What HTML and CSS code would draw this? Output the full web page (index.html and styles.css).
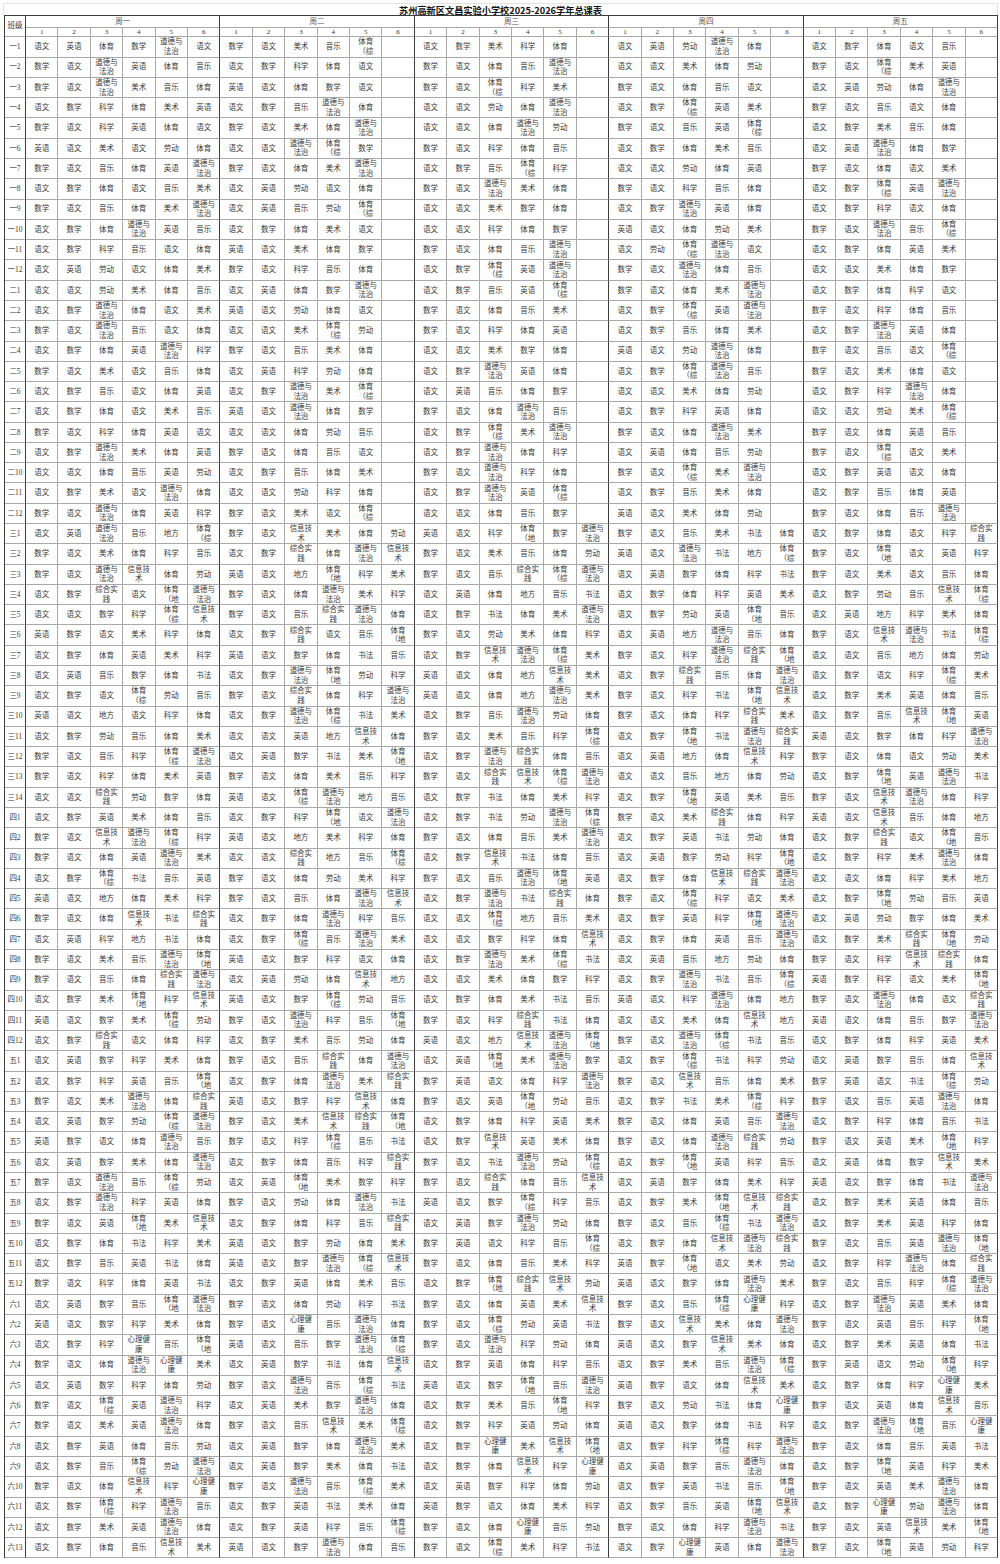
FILE: index.html
```html
<!DOCTYPE html>
<html lang="zh-CN">
<head>
<meta charset="utf-8">
<title>苏州高新区文昌实验小学校2025-2026学年总课表</title>
<link rel="stylesheet" href="styles.css">
</head>
<body>
<div class="sheet">
<div class="title">苏州高新区文昌实验小学校2025-2026学年总课表</div>
<table class="grid">
<colgroup><col class="k"><col span="30" class="p"></colgroup>
<thead>
<tr class="h1"><th rowspan="2" class="cls">班级</th><th colspan="6">周一</th><th colspan="6">周二</th><th colspan="6">周三</th><th colspan="6">周四</th><th colspan="6">周五</th></tr>
<tr class="h2"><th>1</th><th>2</th><th>3</th><th>4</th><th>5</th><th>6</th><th>1</th><th>2</th><th>3</th><th>4</th><th>5</th><th>6</th><th>1</th><th>2</th><th>3</th><th>4</th><th>5</th><th>6</th><th>1</th><th>2</th><th>3</th><th>4</th><th>5</th><th>6</th><th>1</th><th>2</th><th>3</th><th>4</th><th>5</th><th>6</th></tr>
</thead>
<tbody>
<tr><th>一1<td>语文<td>英语<td>体育<td>数学<td>道德与法治<td>语文<td>数学<td>语文<td>美术<td>音乐<td>体育（综<td><td>语文<td>数学<td>美术<td>科学<td>体育<td><td>语文<td>英语<td>劳动<td>道德与法治<td>体育<td><td>语文<td>数学<td>体育<td>语文<td>音乐<td>
<tr><th>一2<td>数学<td>语文<td>道德与法治<td>英语<td>体育<td>音乐<td>语文<td>数学<td>科学<td>体育<td>语文<td><td>数学<td>语文<td>体育<td>音乐<td>道德与法治<td><td>语文<td>语文<td>美术<td>体育<td>劳动<td><td>数学<td>语文<td>体育（综<td>美术<td>英语<td>
<tr><th>一3<td>数学<td>语文<td>道德与法治<td>美术<td>音乐<td>体育<td>英语<td>语文<td>体育<td>数学<td>语文<td><td>数学<td>语文<td>体育（综<td>科学<td>美术<td><td>数学<td>语文<td>体育<td>音乐<td>语文<td><td>语文<td>英语<td>劳动<td>体育<td>道德与法治<td>
<tr><th>一4<td>语文<td>数学<td>科学<td>体育<td>美术<td>英语<td>语文<td>数学<td>音乐<td>道德与法治<td>体育<td><td>语文<td>语文<td>劳动<td>体育<td>道德与法治<td><td>语文<td>数学<td>体育（综<td>英语<td>美术<td><td>数学<td>语文<td>音乐<td>语文<td>体育<td>
<tr><th>一5<td>数学<td>语文<td>科学<td>英语<td>体育<td>语文<td>数学<td>语文<td>美术<td>体育<td>道德与法治<td><td>语文<td>语文<td>体育<td>道德与法治<td>劳动<td><td>数学<td>语文<td>音乐<td>英语<td>体育（综<td><td>语文<td>数学<td>美术<td>音乐<td>体育<td>
<tr><th>一6<td>英语<td>语文<td>美术<td>语文<td>劳动<td>体育<td>语文<td>语文<td>道德与法治<td>体育（综<td>数学<td><td>数学<td>语文<td>科学<td>体育<td>音乐<td><td>语文<td>数学<td>体育<td>美术<td>音乐<td><td>语文<td>英语<td>道德与法治<td>体育<td>数学<td>
<tr><th>一7<td>数学<td>语文<td>音乐<td>体育<td>英语<td>道德与法治<td>数学<td>语文<td>体育<td>美术<td>道德与法治<td><td>语文<td>数学<td>音乐<td>体育（综<td>科学<td><td>语文<td>语文<td>劳动<td>体育<td>英语<td><td>数学<td>语文<td>体育<td>语文<td>美术<td>
<tr><th>一8<td>语文<td>数学<td>体育<td>语文<td>音乐<td>美术<td>语文<td>英语<td>劳动<td>语文<td>体育<td><td>数学<td>语文<td>道德与法治<td>美术<td>体育<td><td>数学<td>语文<td>科学<td>音乐<td>体育<td><td>语文<td>数学<td>体育（综<td>英语<td>道德与法治<td>
<tr><th>一9<td>数学<td>语文<td>音乐<td>体育<td>美术<td>道德与法治<td>语文<td>英语<td>音乐<td>劳动<td>体育（综<td><td>语文<td>语文<td>美术<td>数学<td>体育<td><td>语文<td>数学<td>道德与法治<td>英语<td>体育<td><td>语文<td>数学<td>科学<td>语文<td>体育<td>
<tr><th>一10<td>语文<td>数学<td>体育<td>道德与法治<td>英语<td>音乐<td>语文<td>数学<td>体育<td>美术<td>语文<td><td>语文<td>语文<td>科学<td>体育<td>数学<td><td>英语<td>语文<td>体育<td>劳动<td>美术<td><td>数学<td>语文<td>道德与法治<td>音乐<td>体育（综<td>
<tr><th>一11<td>语文<td>数学<td>科学<td>音乐<td>语文<td>体育<td>英语<td>语文<td>美术<td>体育<td>数学<td><td>数学<td>语文<td>体育<td>音乐<td>道德与法治<td><td>语文<td>劳动<td>体育（综<td>道德与法治<td>语文<td><td>语文<td>数学<td>体育<td>英语<td>美术<td>
<tr><th>一12<td>语文<td>英语<td>劳动<td>语文<td>体育<td>美术<td>数学<td>语文<td>科学<td>音乐<td>体育<td><td>语文<td>数学<td>体育（综<td>英语<td>道德与法治<td><td>数学<td>语文<td>道德与法治<td>体育<td>音乐<td><td>语文<td>语文<td>美术<td>体育<td>数学<td>
<tr><th>二1<td>语文<td>语文<td>劳动<td>美术<td>体育<td>音乐<td>语文<td>英语<td>体育<td>数学<td>道德与法治<td><td>语文<td>数学<td>音乐<td>英语<td>体育（综<td><td>数学<td>语文<td>体育<td>美术<td>道德与法治<td><td>语文<td>数学<td>体育<td>科学<td>语文<td>
<tr><th>二2<td>语文<td>数学<td>道德与法治<td>体育<td>语文<td>美术<td>英语<td>语文<td>劳动<td>体育<td>语文<td><td>数学<td>语文<td>体育<td>音乐<td>美术<td><td>语文<td>数学<td>体育（综<td>英语<td>道德与法治<td><td>数学<td>语文<td>科学<td>体育<td>音乐<td>
<tr><th>二3<td>数学<td>语文<td>道德与法治<td>音乐<td>语文<td>体育<td>语文<td>语文<td>美术<td>体育（综<td>劳动<td><td>数学<td>语文<td>科学<td>体育<td>英语<td><td>语文<td>数学<td>音乐<td>体育<td>美术<td><td>语文<td>数学<td>道德与法治<td>英语<td>体育<td>
<tr><th>二4<td>语文<td>数学<td>体育<td>英语<td>道德与法治<td>科学<td>数学<td>语文<td>音乐<td>美术<td>体育<td><td>语文<td>语文<td>美术<td>数学<td>体育<td><td>英语<td>语文<td>劳动<td>道德与法治<td>体育<td><td>数学<td>语文<td>音乐<td>语文<td>体育（综<td>
<tr><th>二5<td>数学<td>语文<td>美术<td>语文<td>音乐<td>体育<td>语文<td>英语<td>科学<td>劳动<td>体育<td><td>语文<td>数学<td>道德与法治<td>英语<td>体育<td><td>语文<td>数学<td>体育（综<td>道德与法治<td>音乐<td><td>数学<td>语文<td>美术<td>体育<td>语文<td>
<tr><th>二6<td>语文<td>数学<td>音乐<td>语文<td>体育<td>英语<td>语文<td>数学<td>道德与法治<td>美术<td>体育（综<td><td>语文<td>英语<td>音乐<td>体育<td>数学<td><td>语文<td>语文<td>美术<td>体育<td>劳动<td><td>语文<td>数学<td>科学<td>道德与法治<td>体育<td>
<tr><th>二7<td>语文<td>数学<td>体育<td>语文<td>美术<td>音乐<td>英语<td>语文<td>道德与法治<td>体育<td>数学<td><td>数学<td>语文<td>体育<td>道德与法治<td>音乐<td><td>语文<td>数学<td>科学<td>英语<td>体育<td><td>语文<td>语文<td>劳动<td>美术<td>体育（综<td>
<tr><th>二8<td>数学<td>语文<td>科学<td>体育<td>英语<td>语文<td>语文<td>语文<td>体育<td>劳动<td>音乐<td><td>语文<td>数学<td>体育（综<td>美术<td>道德与法治<td><td>数学<td>语文<td>体育<td>道德与法治<td>美术<td><td>数学<td>语文<td>体育<td>英语<td>音乐<td>
<tr><th>二9<td>语文<td>数学<td>道德与法治<td>美术<td>体育<td>英语<td>数学<td>语文<td>体育<td>音乐<td>语文<td><td>语文<td>数学<td>道德与法治<td>体育<td>科学<td><td>语文<td>英语<td>体育<td>音乐<td>劳动<td><td>数学<td>语文<td>体育（综<td>语文<td>美术<td>
<tr><th>二10<td>语文<td>语文<td>体育<td>音乐<td>英语<td>劳动<td>语文<td>数学<td>音乐<td>体育<td>美术<td><td>数学<td>语文<td>道德与法治<td>科学<td>体育<td><td>数学<td>语文<td>体育（综<td>美术<td>道德与法治<td><td>语文<td>数学<td>英语<td>语文<td>体育<td>
<tr><th>二11<td>语文<td>数学<td>美术<td>语文<td>道德与法治<td>体育<td>语文<td>语文<td>劳动<td>科学<td>体育<td><td>语文<td>数学<td>道德与法治<td>英语<td>体育（综<td><td>语文<td>数学<td>音乐<td>美术<td>体育<td><td>语文<td>数学<td>音乐<td>体育<td>英语<td>
<tr><th>二12<td>数学<td>语文<td>道德与法治<td>体育<td>英语<td>科学<td>数学<td>语文<td>美术<td>语文<td>体育（综<td><td>语文<td>语文<td>体育<td>音乐<td>数学<td><td>英语<td>语文<td>美术<td>体育<td>劳动<td><td>数学<td>语文<td>体育<td>音乐<td>道德与法治<td>
<tr><th>三1<td>语文<td>英语<td>道德与法治<td>音乐<td>地方<td>体育（综<td>数学<td>语文<td>信息技术<td>美术<td>体育<td>劳动<td>英语<td>语文<td>科学<td>体育（地<td>数学<td>道德与法治<td>数学<td>语文<td>音乐<td>美术<td>书法<td>体育<td>语文<td>数学<td>体育<td>语文<td>科学<td>综合实践
<tr><th>三2<td>数学<td>语文<td>美术<td>体育<td>科学<td>音乐<td>语文<td>数学<td>综合实践<td>体育<td>道德与法治<td>信息技术<td>数学<td>语文<td>美术<td>音乐<td>体育<td>劳动<td>英语<td>语文<td>道德与法治<td>书法<td>地方<td>体育（综<td>数学<td>语文<td>体育（地<td>语文<td>英语<td>科学
<tr><th>三3<td>数学<td>语文<td>道德与法治<td>信息技术<td>体育<td>劳动<td>英语<td>语文<td>地方<td>体育（地<td>科学<td>美术<td>数学<td>语文<td>音乐<td>综合实践<td>体育（综<td>道德与法治<td>语文<td>英语<td>数学<td>体育<td>科学<td>书法<td>数学<td>语文<td>美术<td>语文<td>音乐<td>体育
<tr><th>三4<td>语文<td>数学<td>综合实践<td>语文<td>体育（地<td>道德与法治<td>数学<td>语文<td>体育<td>道德与法治<td>美术<td>科学<td>语文<td>英语<td>体育<td>地方<td>音乐<td>书法<td>语文<td>数学<td>体育<td>科学<td>英语<td>美术<td>语文<td>数学<td>劳动<td>音乐<td>信息技术<td>体育（综
<tr><th>三5<td>语文<td>语文<td>数学<td>科学<td>体育（综<td>信息技术<td>数学<td>语文<td>音乐<td>综合实践<td>道德与法治<td>体育<td>语文<td>数学<td>书法<td>体育<td>美术<td>道德与法治<td>语文<td>数学<td>劳动<td>英语<td>体育（地<td>音乐<td>语文<td>英语<td>地方<td>科学<td>美术<td>体育
<tr><th>三6<td>英语<td>数学<td>语文<td>美术<td>科学<td>体育<td>语文<td>数学<td>综合实践<td>语文<td>音乐<td>体育（地<td>数学<td>语文<td>劳动<td>美术<td>体育<td>科学<td>语文<td>英语<td>地方<td>道德与法治<td>音乐<td>体育<td>数学<td>语文<td>信息技术<td>道德与法治<td>书法<td>体育（综
<tr><th>三7<td>语文<td>数学<td>体育<td>英语<td>美术<td>科学<td>英语<td>语文<td>数学<td>体育<td>书法<td>音乐<td>语文<td>数学<td>信息技术<td>道德与法治<td>体育（综<td>美术<td>数学<td>语文<td>科学<td>道德与法治<td>综合实践<td>体育（地<td>语文<td>语文<td>音乐<td>地方<td>体育<td>劳动
<tr><th>三8<td>语文<td>英语<td>音乐<td>数学<td>体育<td>书法<td>语文<td>数学<td>道德与法治<td>体育（地<td>劳动<td>科学<td>英语<td>语文<td>体育<td>地方<td>信息技术<td>美术<td>语文<td>数学<td>综合实践<td>音乐<td>体育<td>道德与法治<td>语文<td>数学<td>语文<td>科学<td>体育（综<td>美术
<tr><th>三9<td>语文<td>数学<td>语文<td>体育（综<td>劳动<td>音乐<td>数学<td>语文<td>综合实践<td>体育<td>科学<td>道德与法治<td>英语<td>语文<td>体育<td>地方<td>道德与法治<td>美术<td>数学<td>语文<td>科学<td>书法<td>体育（地<td>信息技术<td>语文<td>数学<td>美术<td>英语<td>体育<td>音乐
<tr><th>三10<td>英语<td>语文<td>地方<td>语文<td>科学<td>体育<td>语文<td>数学<td>道德与法治<td>体育（综<td>书法<td>美术<td>语文<td>数学<td>音乐<td>道德与法治<td>劳动<td>体育<td>数学<td>语文<td>体育<td>科学<td>综合实践<td>美术<td>语文<td>数学<td>音乐<td>信息技术<td>体育（地<td>英语
<tr><th>三11<td>语文<td>数学<td>劳动<td>音乐<td>体育<td>美术<td>语文<td>语文<td>英语<td>地方<td>信息技术<td>体育<td>数学<td>语文<td>美术<td>音乐<td>科学<td>体育（综<td>语文<td>数学<td>体育（地<td>书法<td>道德与法治<td>综合实践<td>英语<td>语文<td>数学<td>体育<td>科学<td>道德与法治
<tr><th>三12<td>数学<td>语文<td>音乐<td>科学<td>体育（综<td>道德与法治<td>语文<td>英语<td>数学<td>书法<td>美术<td>体育（地<td>语文<td>数学<td>道德与法治<td>综合实践<td>体育<td>音乐<td>语文<td>英语<td>地方<td>体育<td>信息技术<td>科学<td>数学<td>语文<td>体育<td>语文<td>劳动<td>美术
<tr><th>三13<td>数学<td>语文<td>科学<td>体育<td>美术<td>英语<td>数学<td>语文<td>体育<td>美术<td>音乐<td>科学<td>数学<td>语文<td>综合实践<td>信息技术<td>体育（综<td>道德与法治<td>语文<td>语文<td>音乐<td>地方<td>体育<td>劳动<td>语文<td>数学<td>体育（地<td>英语<td>道德与法治<td>书法
<tr><th>三14<td>语文<td>语文<td>综合实践<td>劳动<td>数学<td>体育<td>英语<td>语文<td>体育（综<td>道德与法治<td>地方<td>音乐<td>语文<td>数学<td>书法<td>体育<td>美术<td>科学<td>语文<td>数学<td>体育（地<td>英语<td>美术<td>音乐<td>数学<td>语文<td>信息技术<td>道德与法治<td>体育<td>科学
<tr><th>四1<td>语文<td>数学<td>英语<td>美术<td>体育<td>音乐<td>语文<td>数学<td>科学<td>体育（地<td>语文<td>道德与法治<td>语文<td>数学<td>书法<td>劳动<td>道德与法治<td>体育（综<td>数学<td>语文<td>美术<td>综合实践<td>体育<td>科学<td>英语<td>语文<td>信息技术<td>音乐<td>体育<td>地方
<tr><th>四2<td>数学<td>语文<td>信息技术<td>道德与法治<td>体育（综<td>科学<td>英语<td>语文<td>地方<td>美术<td>科学<td>体育<td>数学<td>语文<td>体育<td>音乐<td>美术<td>道德与法治<td>语文<td>数学<td>英语<td>书法<td>劳动<td>体育<td>语文<td>数学<td>综合实践<td>语文<td>体育（地<td>音乐
<tr><th>四3<td>数学<td>语文<td>体育<td>英语<td>道德与法治<td>美术<td>语文<td>语文<td>综合实践<td>地方<td>音乐<td>体育（综<td>语文<td>数学<td>信息技术<td>书法<td>体育<td>音乐<td>语文<td>英语<td>数学<td>劳动<td>科学<td>体育（地<td>语文<td>数学<td>科学<td>美术<td>道德与法治<td>体育
<tr><th>四4<td>语文<td>数学<td>体育（综<td>书法<td>音乐<td>英语<td>数学<td>语文<td>体育<td>劳动<td>美术<td>科学<td>数学<td>语文<td>音乐<td>道德与法治<td>体育（地<td>英语<td>语文<td>数学<td>体育<td>信息技术<td>综合实践<td>道德与法治<td>语文<td>语文<td>体育<td>科学<td>美术<td>地方
<tr><th>四5<td>英语<td>语文<td>地方<td>体育<td>美术<td>科学<td>数学<td>语文<td>音乐<td>体育<td>道德与法治<td>信息技术<td>语文<td>数学<td>道德与法治<td>书法<td>综合实践<td>体育<td>数学<td>语文<td>体育（综<td>科学<td>语文<td>美术<td>语文<td>数学<td>体育（地<td>劳动<td>音乐<td>英语
<tr><th>四6<td>数学<td>语文<td>体育<td>信息技术<td>书法<td>综合实践<td>语文<td>数学<td>体育<td>道德与法治<td>科学<td>音乐<td>语文<td>语文<td>体育（综<td>地方<td>音乐<td>美术<td>语文<td>数学<td>英语<td>科学<td>体育（地<td>道德与法治<td>语文<td>英语<td>劳动<td>数学<td>体育<td>美术
<tr><th>四7<td>语文<td>英语<td>科学<td>地方<td>书法<td>体育<td>语文<td>数学<td>体育（综<td>音乐<td>道德与法治<td>美术<td>语文<td>语文<td>数学<td>科学<td>体育<td>信息技术<td>语文<td>数学<td>体育<td>英语<td>音乐<td>道德与法治<td>语文<td>数学<td>美术<td>综合实践<td>体育（地<td>劳动
<tr><th>四8<td>数学<td>语文<td>美术<td>音乐<td>道德与法治<td>体育（地<td>英语<td>语文<td>数学<td>科学<td>语文<td>体育<td>语文<td>数学<td>道德与法治<td>美术<td>体育（综<td>书法<td>语文<td>英语<td>音乐<td>地方<td>劳动<td>体育<td>数学<td>语文<td>科学<td>信息技术<td>综合实践<td>体育
<tr><th>四9<td>数学<td>语文<td>音乐<td>体育<td>综合实践<td>道德与法治<td>语文<td>英语<td>劳动<td>体育<td>信息技术<td>地方<td>语文<td>语文<td>美术<td>体育<td>数学<td>科学<td>语文<td>数学<td>道德与法治<td>书法<td>音乐<td>体育（综<td>英语<td>数学<td>科学<td>语文<td>美术<td>体育（地
<tr><th>四10<td>语文<td>数学<td>美术<td>体育（地<td>科学<td>信息技术<td>英语<td>语文<td>数学<td>体育（综<td>劳动<td>音乐<td>语文<td>数学<td>体育<td>美术<td>书法<td>音乐<td>英语<td>语文<td>科学<td>道德与法治<td>体育<td>地方<td>数学<td>语文<td>道德与法治<td>体育<td>语文<td>综合实践
<tr><th>四11<td>英语<td>语文<td>数学<td>美术<td>体育（综<td>劳动<td>数学<td>语文<td>道德与法治<td>科学<td>音乐<td>体育（地<td>数学<td>语文<td>科学<td>综合实践<td>书法<td>体育<td>语文<td>语文<td>美术<td>体育<td>信息技术<td>地方<td>英语<td>语文<td>体育<td>音乐<td>数学<td>道德与法治
<tr><th>四12<td>语文<td>数学<td>综合实践<td>语文<td>体育<td>科学<td>语文<td>数学<td>美术<td>音乐<td>劳动<td>体育<td>英语<td>语文<td>地方<td>信息技术<td>道德与法治<td>体育（地<td>数学<td>语文<td>道德与法治<td>体育（综<td>书法<td>音乐<td>语文<td>数学<td>体育<td>科学<td>英语<td>美术
<tr><th>五1<td>语文<td>英语<td>数学<td>科学<td>美术<td>体育<td>数学<td>语文<td>音乐<td>综合实践<td>体育<td>道德与法治<td>语文<td>英语<td>体育（地<td>美术<td>道德与法治<td>数学<td>语文<td>数学<td>体育（综<td>书法<td>科学<td>劳动<td>语文<td>英语<td>数学<td>音乐<td>体育<td>信息技术
<tr><th>五2<td>语文<td>数学<td>科学<td>英语<td>音乐<td>体育（地<td>语文<td>数学<td>体育<td>道德与法治<td>美术<td>综合实践<td>数学<td>英语<td>语文<td>体育<td>科学<td>道德与法治<td>数学<td>语文<td>信息技术<td>音乐<td>体育<td>美术<td>数学<td>英语<td>语文<td>书法<td>体育（综<td>劳动
<tr><th>五3<td>数学<td>语文<td>美术<td>道德与法治<td>体育<td>综合实践<td>英语<td>语文<td>数学<td>科学<td>信息技术<td>体育<td>数学<td>语文<td>英语<td>体育（地<td>劳动<td>音乐<td>语文<td>数学<td>书法<td>美术<td>体育（综<td>科学<td>数学<td>语文<td>音乐<td>英语<td>道德与法治<td>体育
<tr><th>五4<td>语文<td>英语<td>数学<td>劳动<td>体育（综<td>道德与法治<td>数学<td>语文<td>美术<td>信息技术<td>综合实践<td>体育（地<td>语文<td>数学<td>体育<td>科学<td>英语<td>美术<td>数学<td>语文<td>体育<td>英语<td>音乐<td>道德与法治<td>语文<td>数学<td>科学<td>体育<td>音乐<td>书法
<tr><th>五5<td>英语<td>数学<td>语文<td>体育<td>道德与法治<td>音乐<td>数学<td>语文<td>科学<td>体育（综<td>音乐<td>书法<td>语文<td>数学<td>信息技术<td>英语<td>美术<td>体育<td>数学<td>语文<td>体育<td>道德与法治<td>综合实践<td>劳动<td>数学<td>语文<td>英语<td>美术<td>体育（地<td>科学
<tr><th>五6<td>语文<td>英语<td>数学<td>美术<td>体育<td>道德与法治<td>语文<td>数学<td>体育<td>音乐<td>科学<td>综合实践<td>数学<td>语文<td>书法<td>道德与法治<td>劳动<td>体育（综<td>语文<td>数学<td>体育（地<td>英语<td>科学<td>音乐<td>语文<td>英语<td>体育<td>数学<td>信息技术<td>美术
<tr><th>五7<td>数学<td>语文<td>道德与法治<td>音乐<td>体育（综<td>劳动<td>语文<td>英语<td>体育（地<td>美术<td>数学<td>科学<td>数学<td>语文<td>综合实践<td>体育<td>音乐<td>信息技术<td>语文<td>英语<td>数学<td>体育<td>美术<td>科学<td>英语<td>语文<td>数学<td>体育<td>书法<td>道德与法治
<tr><th>五8<td>语文<td>数学<td>道德与法治<td>科学<td>英语<td>体育<td>数学<td>语文<td>劳动<td>体育<td>道德与法治<td>书法<td>英语<td>语文<td>数学<td>体育（综<td>科学<td>音乐<td>语文<td>数学<td>美术<td>体育（地<td>信息技术<td>综合实践<td>语文<td>数学<td>美术<td>英语<td>体育<td>音乐
<tr><th>五9<td>数学<td>语文<td>英语<td>体育（地<td>美术<td>信息技术<td>语文<td>数学<td>体育<td>科学<td>音乐<td>综合实践<td>语文<td>英语<td>数学<td>道德与法治<td>劳动<td>体育<td>数学<td>语文<td>音乐<td>体育（综<td>书法<td>道德与法治<td>语文<td>数学<td>美术<td>英语<td>科学<td>体育
<tr><th>五10<td>语文<td>数学<td>体育<td>书法<td>科学<td>美术<td>英语<td>语文<td>数学<td>劳动<td>体育<td>美术<td>数学<td>英语<td>语文<td>科学<td>音乐<td>体育（综<td>语文<td>数学<td>体育<td>信息技术<td>道德与法治<td>综合实践<td>数学<td>语文<td>音乐<td>英语<td>道德与法治<td>体育（地
<tr><th>五11<td>语文<td>数学<td>音乐<td>英语<td>书法<td>体育<td>英语<td>语文<td>数学<td>道德与法治<td>体育（综<td>信息技术<td>数学<td>语文<td>体育<td>音乐<td>美术<td>科学<td>英语<td>数学<td>体育（地<td>语文<td>美术<td>劳动<td>语文<td>数学<td>科学<td>道德与法治<td>体育<td>综合实践
<tr><th>五12<td>数学<td>语文<td>科学<td>体育<td>英语<td>书法<td>语文<td>数学<td>英语<td>体育<td>美术<td>音乐<td>语文<td>数学<td>体育（地<td>综合实践<td>信息技术<td>劳动<td>英语<td>语文<td>数学<td>体育<td>道德与法治<td>美术<td>数学<td>语文<td>音乐<td>科学<td>体育（综<td>道德与法治
<tr><th>六1<td>语文<td>英语<td>数学<td>音乐<td>体育（地<td>道德与法治<td>数学<td>语文<td>体育<td>劳动<td>科学<td>书法<td>数学<td>语文<td>体育<td>英语<td>美术<td>信息技术<td>数学<td>语文<td>音乐<td>体育（综<td>心理健康<td>科学<td>语文<td>数学<td>道德与法治<td>英语<td>美术<td>体育
<tr><th>六2<td>英语<td>语文<td>数学<td>科学<td>美术<td>体育<td>数学<td>语文<td>心理健康<td>音乐<td>道德与法治<td>体育<td>数学<td>语文<td>体育（综<td>劳动<td>英语<td>书法<td>数学<td>语文<td>信息技术<td>美术<td>体育<td>道德与法治<td>数学<td>语文<td>英语<td>音乐<td>科学<td>体育（地
<tr><th>六3<td>语文<td>数学<td>科学<td>心理健康<td>音乐<td>体育（地<td>英语<td>语文<td>音乐<td>数学<td>道德与法治<td>体育（综<td>数学<td>语文<td>道德与法治<td>科学<td>劳动<td>体育<td>英语<td>语文<td>数学<td>信息技术<td>美术<td>体育<td>语文<td>数学<td>美术<td>英语<td>体育<td>书法
<tr><th>六4<td>数学<td>语文<td>体育<td>道德与法治<td>心理健康<td>美术<td>语文<td>英语<td>数学<td>书法<td>体育<td>信息技术<td>语文<td>数学<td>英语<td>体育<td>科学<td>音乐<td>语文<td>数学<td>美术<td>音乐<td>道德与法治<td>体育（综<td>数学<td>英语<td>语文<td>劳动<td>体育（地<td>科学
<tr><th>六5<td>语文<td>英语<td>数学<td>科学<td>体育<td>劳动<td>数学<td>语文<td>道德与法治<td>音乐<td>体育（综<td>书法<td>英语<td>语文<td>数学<td>体育（地<td>音乐<td>道德与法治<td>英语<td>数学<td>语文<td>体育<td>信息技术<td>美术<td>语文<td>数学<td>体育<td>科学<td>心理健康<td>美术
<tr><th>六6<td>数学<td>语文<td>体育（综<td>英语<td>道德与法治<td>科学<td>语文<td>英语<td>美术<td>数学<td>道德与法治<td>体育<td>语文<td>数学<td>美术<td>音乐<td>体育（地<td>科学<td>数学<td>语文<td>劳动<td>书法<td>体育<td>心理健康<td>数学<td>语文<td>英语<td>体育<td>信息技术<td>音乐
<tr><th>六7<td>数学<td>语文<td>美术<td>英语<td>道德与法治<td>体育<td>数学<td>语文<td>音乐<td>信息技术<td>美术<td>体育（综<td>语文<td>数学<td>科学<td>英语<td>劳动<td>体育<td>英语<td>语文<td>数学<td>体育<td>书法<td>科学<td>语文<td>数学<td>道德与法治<td>体育（地<td>音乐<td>心理健康
<tr><th>六8<td>语文<td>数学<td>英语<td>体育<td>音乐<td>劳动<td>语文<td>英语<td>数学<td>体育<td>道德与法治<td>美术<td>语文<td>数学<td>心理健康<td>美术<td>信息技术<td>体育（地<td>语文<td>数学<td>科学<td>体育（综<td>科学<td>道德与法治<td>数学<td>语文<td>体育<td>音乐<td>英语<td>书法
<tr><th>六9<td>语文<td>数学<td>音乐<td>体育（综<td>劳动<td>道德与法治<td>语文<td>英语<td>数学<td>美术<td>体育<td>书法<td>语文<td>数学<td>体育<td>信息技术<td>科学<td>心理健康<td>语文<td>英语<td>数学<td>音乐<td>道德与法治<td>体育<td>语文<td>数学<td>体育（地<td>英语<td>科学<td>美术
<tr><th>六10<td>数学<td>语文<td>体育<td>信息技术<td>科学<td>心理健康<td>数学<td>语文<td>道德与法治<td>音乐<td>体育（综<td>美术<td>语文<td>英语<td>数学<td>科学<td>体育<td>劳动<td>语文<td>数学<td>英语<td>书法<td>音乐<td>体育（地<td>数学<td>语文<td>英语<td>美术<td>道德与法治<td>体育
<tr><th>六11<td>语文<td>数学<td>体育（综<td>科学<td>道德与法治<td>音乐<td>语文<td>数学<td>英语<td>书法<td>美术<td>体育<td>英语<td>数学<td>语文<td>体育<td>美术<td>科学<td>语文<td>数学<td>音乐<td>英语<td>体育（地<td>信息技术<td>语文<td>数学<td>心理健康<td>劳动<td>道德与法治<td>体育
<tr><th>六12<td>语文<td>数学<td>美术<td>英语<td>道德与法治<td>体育<td>语文<td>数学<td>英语<td>科学<td>音乐<td>体育（综<td>数学<td>语文<td>体育<td>心理健康<td>音乐<td>劳动<td>数学<td>语文<td>体育<td>科学<td>道德与法治<td>书法<td>数学<td>语文<td>英语<td>信息技术<td>美术<td>体育（地
<tr><th>六13<td>语文<td>数学<td>体育<td>音乐<td>信息技术<td>美术<td>英语<td>语文<td>数学<td>道德与法治<td>体育<td>音乐<td>数学<td>语文<td>体育（综<td>美术<td>科学<td>书法<td>语文<td>数学<td>心理健康<td>英语<td>体育<td>道德与法治<td>数学<td>语文<td>体育（地<td>英语<td>劳动<td>科学
</tbody>
</table>
</div>
</body>
</html>
```

FILE: styles.css
```css
* {
  box-sizing: border-box;
}

body {
  margin: 0;
  background: #ffffff;
}

.sheet {
  width: 994px;
  margin: 3px 0 0 4px;
}

.title {
  height: 11.5px;
  border: 1px solid #e2e2e2;
  border-bottom: 0;
  margin-left: -1px;
  padding-top: 0.5px;
  font-family: "Noto Sans CJK SC", sans-serif;
  font-weight: 700;
  font-size: 9.2px;
  line-height: 10.5px;
  color: #111111;
  text-align: center;
  white-space: nowrap;
}

.grid {
  width: 994px;
  table-layout: fixed;
  border-collapse: separate;
  border-spacing: 0;
  border-top: 1px solid #3c3c3c;
  border-left: 1px solid #3c3c3c;
  font-family: "Liberation Serif", "Noto Sans CJK SC", serif;
  color: #3a3a3a;
}

.grid col.k {
  width: 21px;
}

.grid col.p {
  width: 32.4px;
}

.grid th,
.grid td {
  border-right: 1px solid #a9a9a9;
  border-bottom: 1px solid #a9a9a9;
  padding: 0 3px;
  text-align: center;
  vertical-align: middle;
  font-size: 7.5px;
  font-weight: 400;
  line-height: 9.5px;
  text-spacing-trim: space-all;
}

.grid thead .h1 {
  height: 12.8px;
}

.grid thead .h2 {
  height: 9px;
}

.grid thead .h1 > * {
  border-right-color: #3c3c3c;
  color: #555555;
}

.grid thead .h1 > .cls {
  color: #333333;
  padding: 0;
}

.grid thead .h2 > * {
  font-size: 7px;
  line-height: 8px;
  color: #333333;
}

.grid thead .h2 > :nth-child(6n) {
  border-right-color: #3c3c3c;
}

.grid tbody tr {
  height: 20.29px;
}

.grid tbody th {
  padding: 0;
}

.grid tbody tr > :nth-child(6n+1) {
  border-right-color: #3c3c3c;
}
```
